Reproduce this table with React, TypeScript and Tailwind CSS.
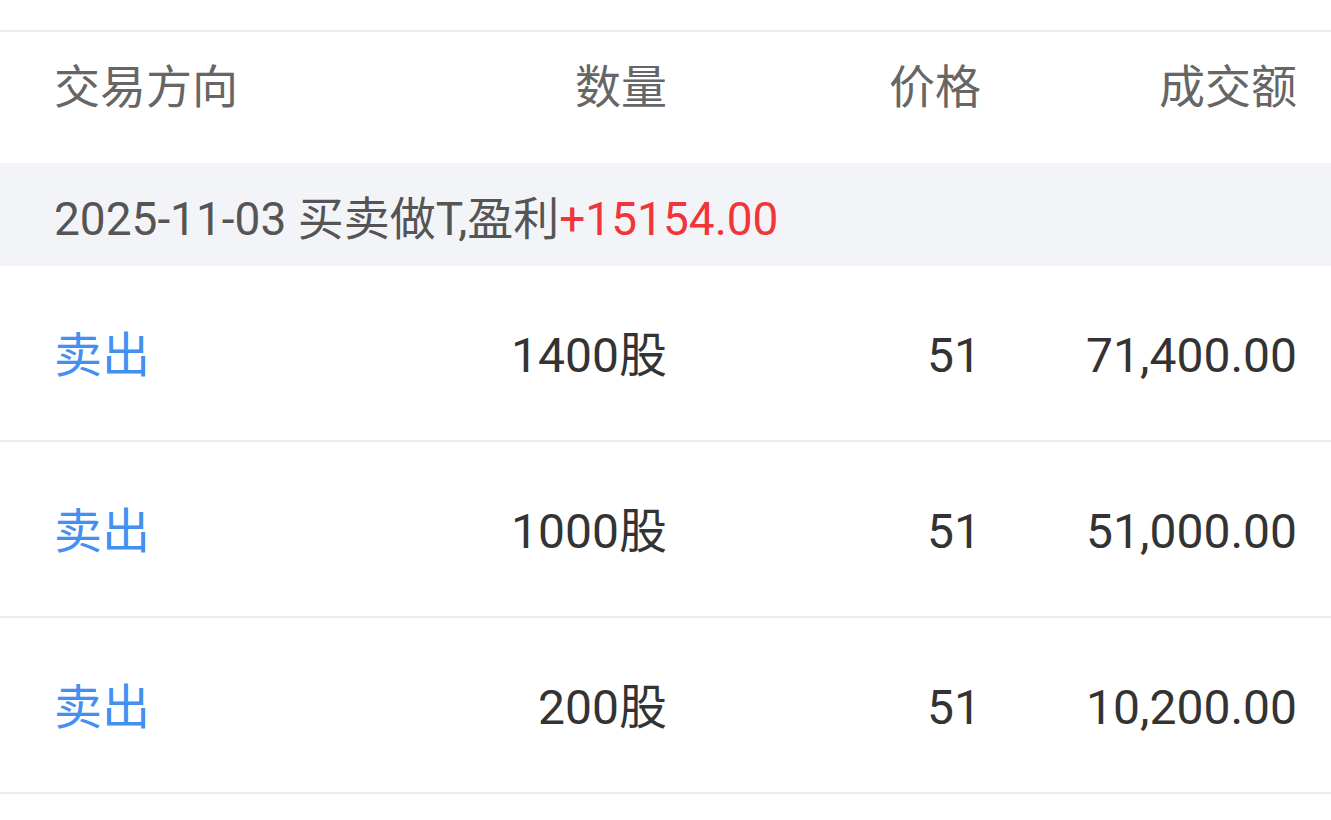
import React from 'react';

const trades = [
  { side: '卖出', qty: '1400股', price: '51', amount: '71,400.00' },
  { side: '卖出', qty: '1000股', price: '51', amount: '51,000.00' },
  { side: '卖出', qty: '200股', price: '51', amount: '10,200.00' },
];

const font = "font-['Roboto','Noto_Sans_CJK_SC',sans-serif]";
const cols = 'grid grid-cols-[613px_314px_1fr] items-center pl-[54px] pr-[34px]';

export default function App() {
  return (
    <div className={`min-h-screen bg-white pt-[30px] ${font}`}>
      <div className="border-t-2 border-[#ececf2]">
        {/* Header */}
        <div className={`${cols} h-[131px] pb-[20px] text-[46px] text-[#666666]`}>
          <div className="flex justify-between">
            <span>交易方向</span>
            <span>数量</span>
          </div>
          <div className="text-right">价格</div>
          <div className="text-right">成交额</div>
        </div>

        {/* Day summary */}
        <div className="flex h-[103px] items-center bg-[#f3f4f8] pl-[54px] pt-[10px] text-[46px] text-[#555555]">
          <span>2025-11-03 买卖做T,盈利</span>
          <span className="text-[#f0353b]">+15154.00</span>
        </div>

        {/* Rows */}
        {trades.map((t, i) => (
          <div key={i} className={`${cols} h-[176px] border-b-2 border-[#ececf2] pt-[6px] text-[48px] text-[#333333]`}>
            <div className="flex justify-between">
              <span className="text-[#4190f2]">{t.side}</span>
              <span>{t.qty}</span>
            </div>
            <div className="text-right">{t.price}</div>
            <div className="text-right">{t.amount}</div>
          </div>
        ))}
      </div>
    </div>
  );
}
